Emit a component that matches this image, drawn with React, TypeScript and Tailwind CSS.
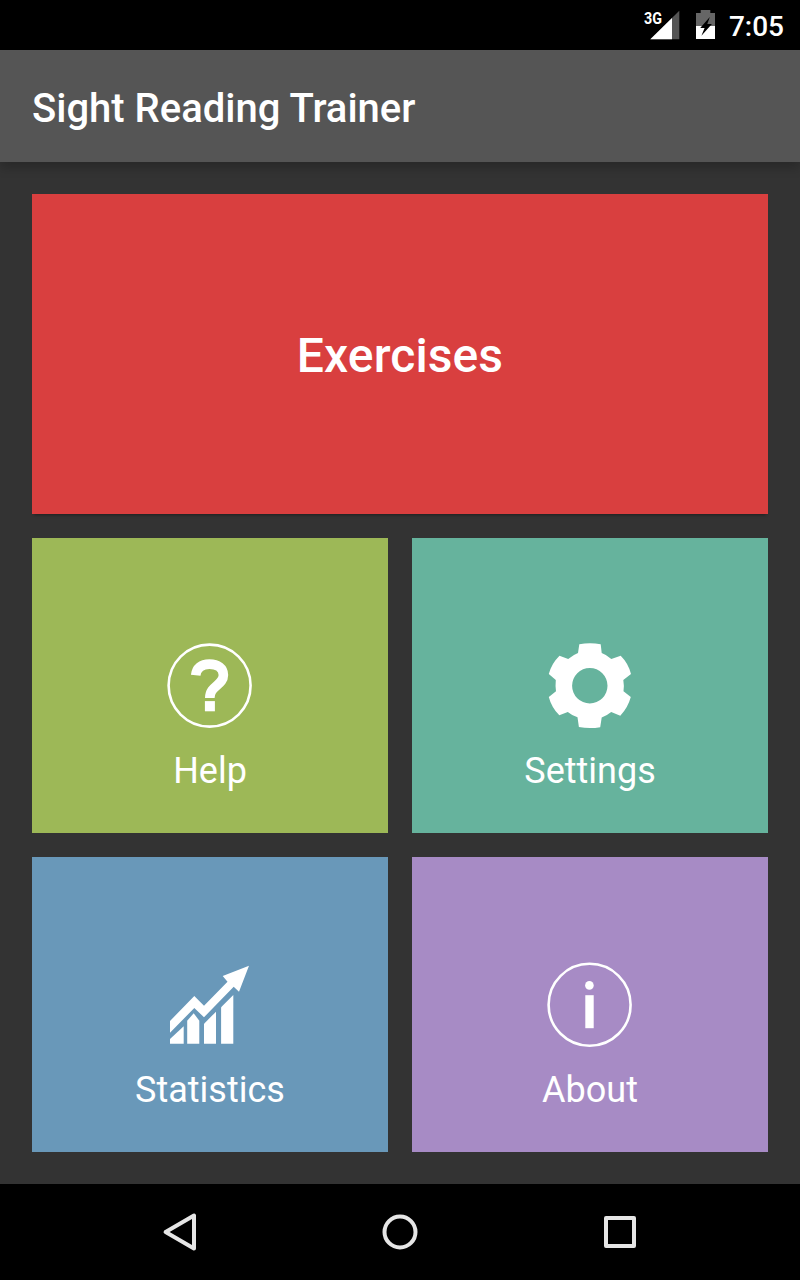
import React from "react";

const HelpIcon = () => (
  <svg viewBox="0 0 96 96" className="size-24" fill="none" stroke="white">
    <circle cx="47.6" cy="47.6" r="41" strokeWidth="2.6" />
    <path
      d="M33.7 37.3C34.4 30.2 39.3 26.1 47.4 26.1C56 26.1 61.4 30.4 61.4 37C61.4 47.5 47.8 47.5 47.8 60"
      strokeWidth="9.6"
    />
    <path d="M47.9 63.1V73.3" strokeWidth="10" />
  </svg>
);

const SettingsIcon = () => (
  <svg viewBox="0 0 96 96" className="size-24" fill="white">
    <path
      fillRule="evenodd"
      d="M37.3 6.2Q48 4.2 58.7 6.2L59.7 15Q65 17 69.3 20.9L78.7 17.7Q86.5 25.5 89 36L81.3 42Q82.3 47.7 81.5 53.3L88.8 59Q86 69.5 78.3 77.7L69.2 74Q65 77.5 59.7 79.5L58.2 89.2Q47.5 91 36.9 89L35.5 79.3Q30 77.5 25.8 74L17.3 77.3Q9.5 69.5 6.8 59L14 53.3Q13.2 47.7 13.8 42L6.8 36Q9.5 25.5 17.5 17.7L26.2 20.9Q31 17 36 15ZM47.8 30a17.7 17.7 0 1 0 0 35.4a17.7 17.7 0 1 0 0-35.4Z"
    />
  </svg>
);

const StatisticsIcon = () => (
  <svg viewBox="0 0 96 96" className="size-24" fill="white">
    <path d="M8 64L32.3 39L42 48.7L65.5 24.7L60.7 19L87 8.7L77 34.7L71.7 29.7L42 60.3L32.3 51L8 75.7Z" />
    <path d="M8 82L21.7 69.3V86.8H8Z" />
    <path d="M25.2 63.7L31.7 56.3L37.3 63.7V86.8H25.2Z" />
    <path d="M42 66.7L54 54.7V86.8H42Z" />
    <path d="M59.1 50.3L71.3 38V86.8H59.1Z" />
  </svg>
);

const AboutIcon = () => (
  <svg viewBox="0 0 96 96" className="size-24" fill="white">
    <circle cx="47.6" cy="47.8" r="41" fill="none" stroke="white" strokeWidth="2.6" />
    <circle cx="47.4" cy="28.4" r="4.3" />
    <rect x="43.3" y="38.2" width="8.4" height="33" />
  </svg>
);

interface TileProps {
  label: string;
  icon: React.ReactNode;
  color: string;
}

const Tile: React.FC<TileProps> = ({ label, icon, color }) => (
  <button
    className={`flex h-[295px] flex-col items-center pt-[100px] ${color}`}
  >
    {icon}
    <span className="mt-4 text-4xl leading-[42px]">{label}</span>
  </button>
);

const StatusBar = () => (
  <div className="flex h-[50px] items-center justify-end bg-black pr-4">
    <svg viewBox="0 0 36 50" className="mr-4 h-[50px] w-9">
      <path d="M6.3 39.3L35.3 10.7V39.3Z" fill="#555555" />
      <path d="M6.3 39.3L28 17.9V39.3Z" fill="white" />
      <text
        x="0"
        y="23.6"
        textLength="18"
        lengthAdjust="spacingAndGlyphs"
        fill="white"
        className="text-[17px] font-bold"
      >
        3G
      </text>
    </svg>
    <svg viewBox="0 0 19 50" className="mr-[14px] h-[50px] w-[19px]">
      <path d="M0 13H4.7V10H14.3V13H19V26H0Z" fill="#666666" />
      <path d="M0 26H19V39H0Z" fill="white" />
      <path d="M13.8 17L4.2 28H8.6L5.4 35.7L15.9 24H11.3Z" fill="black" />
    </svg>
    <span className="pt-1 text-[28px] leading-8 font-medium">7:05</span>
  </div>
);

const NavigationBar = () => (
  <div className="flex h-24 items-center justify-center gap-[172px] bg-black">
    <svg viewBox="0 0 48 48" className="size-12" fill="none" stroke="#e6e6e6" strokeWidth="4" strokeLinejoin="round">
      <path d="M9.6 24L38 7.5V40.5Z" />
    </svg>
    <svg viewBox="0 0 48 48" className="size-12" fill="none" stroke="#e6e6e6" strokeWidth="4">
      <circle cx="24" cy="24" r="15.5" />
    </svg>
    <svg viewBox="0 0 48 48" className="size-12" fill="none" stroke="#e6e6e6" strokeWidth="4" strokeLinejoin="round">
      <rect x="10" y="10" width="28" height="28" />
    </svg>
  </div>
);

const App: React.FC = () => {
  return (
    <div className="flex h-screen w-full flex-col bg-[#333333] font-[Roboto,sans-serif] text-white">
      <StatusBar />
      <header className="flex h-28 items-center bg-[#555555] px-8 pt-1.5 shadow-[0_6px_10px_rgba(0,0,0,0.2)]">
        <h1 className="text-[40px] leading-none font-medium">
          Sight Reading Trainer
        </h1>
      </header>
      <main className="flex grow flex-col gap-6 p-8">
        <button className="flex h-80 items-center justify-center bg-[#d93f3f] pt-1 text-5xl font-medium tracking-[0.1px] shadow-[0_3px_3px_-2px_rgba(0,0,0,0.4)]">
          Exercises
        </button>
        <div className="grid grid-cols-2 gap-6">
          <Tile label="Help" icon={<HelpIcon />} color="bg-[#9db857]" />
          <Tile label="Settings" icon={<SettingsIcon />} color="bg-[#66b39d]" />
          <Tile label="Statistics" icon={<StatisticsIcon />} color="bg-[#6998b9]" />
          <Tile label="About" icon={<AboutIcon />} color="bg-[#a78bc5]" />
        </div>
      </main>
      <NavigationBar />
    </div>
  );
};

export default App;
